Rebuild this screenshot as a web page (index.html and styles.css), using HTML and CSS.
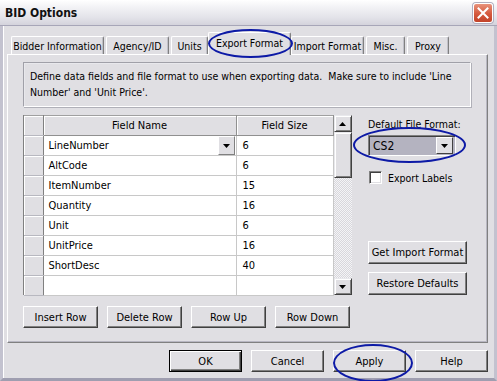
FILE: index.html
```html
<!DOCTYPE html>
<html>
<head>
<meta charset="utf-8">
<link rel="stylesheet" href="styles.css">
</head>
<body>
<div class="window">
  <div class="titlebar">
    <span class="title">BID Options</span>
    <span class="close"><svg width="12" height="12" viewBox="0 0 12 12"><path d="M1.5 1.5 L10.5 10.5 M10.5 1.5 L1.5 10.5" stroke="#fff" stroke-width="2" stroke-linecap="square"/></svg></span>
  </div>
  <div class="frame">
    <div class="tabs">
      <div class="tab t-bidder">Bidder Information</div>
      <div class="tab t-agency">Agency/ID</div>
      <div class="tab t-units">Units</div>
      <div class="tab t-export active">Export Format</div>
      <div class="tab t-import">Import Format</div>
      <div class="tab t-misc">Misc.</div>
      <div class="tab t-proxy">Proxy</div>
    </div>
    <div class="panel">
      <div class="desc">Define data fields and file format to use when exporting data.&nbsp; Make sure to include 'Line Number' and 'Unit Price'.</div>
      <div class="main">
        <div class="grid">
          <table class="cells">
            <tr class="head"><td class="rh"></td><td class="hc">Field Name</td><td class="hc">Field Size</td></tr>
            <tr><td class="rh"></td><td class="c name"><div class="namewrap"><span>LineNumber</span><span class="ddbtn"><svg width="7" height="4" viewBox="0 0 7 4"><path d="M0 0 H7 L3.5 4 Z" fill="#000"/></svg></span></div></td><td class="c">6</td></tr>
            <tr><td class="rh"></td><td class="c">AltCode</td><td class="c">6</td></tr>
            <tr><td class="rh"></td><td class="c">ItemNumber</td><td class="c">15</td></tr>
            <tr><td class="rh"></td><td class="c">Quantity</td><td class="c">16</td></tr>
            <tr><td class="rh"></td><td class="c">Unit</td><td class="c">6</td></tr>
            <tr><td class="rh"></td><td class="c">UnitPrice</td><td class="c">16</td></tr>
            <tr><td class="rh"></td><td class="c">ShortDesc</td><td class="c">40</td></tr>
            <tr><td class="rh"></td><td class="c"></td><td class="c"></td></tr>
          </table>
          <div class="vscroll">
            <div class="sbtn"><svg width="7" height="4" viewBox="0 0 7 4"><path d="M0 4 H7 L3.5 0 Z" fill="#000"/></svg></div>
            <div class="thumb"></div>
            <div class="track"></div>
            <div class="sbtn"><svg width="7" height="4" viewBox="0 0 7 4"><path d="M0 0 H7 L3.5 4 Z" fill="#000"/></svg></div>
          </div>
        </div>
        <div class="side">
          <div class="label">Default File Format:</div>
          <div class="combo"><span class="combotext">CS2</span><span class="combobtn"><svg width="7" height="4" viewBox="0 0 7 4"><path d="M0 0 H7 L3.5 4 Z" fill="#000"/></svg></span></div>
          <div class="check"><span class="box"></span><span>Export Labels</span></div>
          <div class="sidebtns">
            <div class="btn wide">Get Import Format</div>
            <div class="btn wide">Restore Defaults</div>
          </div>
        </div>
      </div>
      <div class="rowbtns">
        <div class="btn rb">Insert Row</div>
        <div class="btn rb">Delete Row</div>
        <div class="btn rb">Row Up</div>
        <div class="btn rb">Row Down</div>
      </div>
    </div>
    <div class="dlgbtns">
      <div class="btn db default">OK</div>
      <div class="btn db">Cancel</div>
      <div class="btn db">Apply</div>
      <div class="btn db">Help</div>
    </div>
  </div>
  <div class="mark mark-tab"></div>
  <div class="mark mark-combo"></div>
  <div class="mark mark-apply"></div>
</div>
</body>
</html>
```
FILE: styles.css
```css
* { box-sizing: border-box; }
html, body { margin: 0; padding: 0; }
body {
  width: 497px;
  height: 381px;
  overflow: hidden;
  font-family: "DejaVu Sans Condensed", "DejaVu Sans", sans-serif;
  font-size: 10.5px;
  color: #000;
  background: #e0dfe3;
}
.window {
  position: relative;
  width: 497px;
  height: 381px;
  background: #e0dfe3;
  display: flex;
  flex-direction: column;
}
.titlebar {
  height: 26px;
  flex: none;
  display: flex;
  align-items: center;
  justify-content: space-between;
  padding: 0 4px 0 5px;
  background: linear-gradient(#ffffff 0%, #f2f2f5 30%, #e3e3e9 70%, #d4d3dc 100%);
  border-bottom: 1px solid #a7a6b8;
}
.title {
  font-family: "DejaVu Sans Condensed", "DejaVu Sans", sans-serif;
  font-weight: bold;
  font-size: 12px;
  color: #111;
  padding-top: 1px;
}
.close {
  width: 20px;
  height: 20px;
  border: 1px solid #fff;
  border-radius: 3px;
  background: linear-gradient(#e8937c, #d4583c 55%, #c2432a);
  display: flex;
  align-items: center;
  justify-content: center;
  box-shadow: 0 0 0 1px #b0aebe;
}
.frame {
  flex: 1;
  display: flex;
  flex-direction: column;
  padding: 6px 6px 0 4px;
  border-left: 3px solid #c3c2cf;
  border-right: 3px solid #c3c2cf;
  border-bottom: 3px solid #9f9eb0;
  box-shadow: inset 1px 0 0 #ffffff;
}
.tabs {
  display: flex;
  align-items: flex-end;
  height: 22px;
  padding-left: 4px;
  gap: 2px;
  position: relative;
  z-index: 2;
}
.tab {
  height: 18px;
  padding: 0;
  display: flex;
  align-items: center;
  justify-content: center;
  flex: none;
  border-top: 1px solid #fff;
  border-left: 1px solid #fff;
  border-right: 1px solid #808080;
  box-shadow: inset -1px 0 0 #c0c0c8;
  border-radius: 2px 2px 0 0;
  background: #e0dfe3;
  white-space: nowrap;
}
.t-bidder { width: 93px; }
.t-agency { width: 63px; }
.t-units { width: 37px; }
.t-export { width: 79px; }
.t-import { width: 73px; }
.t-misc { width: 39px; }
.t-proxy { width: 42px; }
.tab.active {
  position: relative;
  z-index: 3;
  width: 83px;
  height: 23px;
  margin: 0 -2px -1px -2px;
  padding: 0 0 3px 0;
}
.panel {
  height: 289px;
  flex: none;
  border-top: 1px solid #fff;
  border-left: 1px solid #fff;
  border-right: 1px solid #808080;
  border-bottom: 1px solid #808080;
  box-shadow: inset -1px -1px 0 #b8b7c2;
  padding: 7px 16px 0 15px;
}
.desc {
  height: 45px;
  border-top: 1px solid #a0a0a8;
  border-left: 1px solid #a0a0a8;
  border-right: 1px solid #fff;
  border-bottom: 1px solid #fff;
  box-shadow: 1px 1px 0 #b0b0b8, inset 1px 1px 0 #e8e8ec;
  padding: 5px 6px 0 6px;
  line-height: 16px;
}
.main {
  display: flex;
  margin-top: 8px;
  height: 180px;
}
.grid {
  display: flex;
  width: 327px;
  height: 180px;
  border-left: 1px solid #808080;
  flex: none;
}
.cells {
  border-collapse: collapse;
  width: 309px;
  table-layout: fixed;
}
.cells td {
  height: 20px;
  padding: 0;
  white-space: nowrap;
}
.cells td.rh {
  width: 19px;
  background: #e0dfe3;
  border-right: 1px solid #808080;
  border-bottom: 1px solid #b8b8c0;
  box-shadow: inset 1px 1px 0 #fff;
}
.head td.hc {
  background: #e0dfe3;
  text-align: center;
  border-right: 1px solid #909090;
  border-bottom: 1px solid #909090;
  border-top: 1px solid #a0a0a0;
  box-shadow: inset 1px 1px 0 #fff;
  font-size: 11px;
}
.head td.rh { border-top: 1px solid #a0a0a0; }
.head td.hc:nth-child(2) { width: 193px; }
.head td.hc:nth-child(3) { width: 97px; }
.cells td.c {
  background: #fff;
  border-right: 1px solid #c8c8c8;
  border-bottom: 1px solid #c8c8c8;
  padding-left: 5px;
  font-size: 11px;
}
.cells td.c + td.c { padding-left: 6px; }
.cells td.name { padding-left: 5px; padding-right: 1px; }
.namewrap {
  display: flex;
  align-items: center;
  justify-content: space-between;
  height: 19px;
}
.ddbtn {
  width: 17px;
  height: 19px;
  background: #e0dfe3;
  border-top: 1px solid #fff;
  border-left: 1px solid #fff;
  border-right: 1px solid #808080;
  border-bottom: 1px solid #808080;
  display: flex;
  align-items: center;
  justify-content: center;
}
.vscroll {
  width: 18px;
  height: 180px;
  display: flex;
  flex-direction: column;
  flex: none;
}
.sbtn, .thumb {
  background: #e0dfe3;
  border-top: 1px solid #e8e8ec;
  border-left: 1px solid #e8e8ec;
  border-right: 1px solid #404040;
  border-bottom: 1px solid #404040;
  box-shadow: inset 1px 1px 0 #fff, inset -1px -1px 0 #808080;
}
.sbtn {
  height: 17px;
  display: flex;
  align-items: center;
  justify-content: center;
  flex: none;
}
.thumb { height: 46px; flex: none; }
.track {
  flex: 1;
  background-color: #ededf0;
  background-image: repeating-conic-gradient(#d8d7dc 0 25%, #f4f4f6 0 50%);
  background-size: 2px 2px;
}
.side {
  margin-left: 18px;
  flex: 1;
  display: flex;
  flex-direction: column;
}
.label {
  margin-top: 3px;
  line-height: 13px;
}
.combo {
  margin-top: 4px;
  width: 88px;
  height: 21px;
  border-top: 1px solid #808080;
  border-left: 1px solid #808080;
  border-right: 1px solid #fff;
  border-bottom: 1px solid #fff;
  box-shadow: inset 1px 1px 0 #404040;
  background: #b4b3c0;
  display: flex;
  align-items: center;
  justify-content: space-between;
  padding: 2px 2px 2px 4px;
  font-size: 12px;
}
.combobtn {
  width: 17px;
  height: 17px;
  background: #e0dfe3;
  border-top: 1px solid #fff;
  border-left: 1px solid #fff;
  border-right: 1px solid #404040;
  border-bottom: 1px solid #404040;
  display: flex;
  align-items: center;
  justify-content: center;
}
.check {
  margin-top: 15px;
  display: flex;
  align-items: center;
  gap: 6px;
}
.box {
  width: 13px;
  height: 13px;
  background: #fff;
  border-top: 1px solid #808080;
  border-left: 1px solid #808080;
  border-right: 1px solid #fff;
  border-bottom: 1px solid #fff;
  box-shadow: inset 1px 1px 0 #404040, inset -1px -1px 0 #e0dfe3;
  margin-left: 1px;
}
.sidebtns {
  margin-top: auto;
  display: flex;
  flex-direction: column;
  gap: 8px;
}
.btn {
  background: #e0dfe3;
  border-top: 1px solid #fff;
  border-left: 1px solid #fff;
  border-right: 1px solid #404040;
  border-bottom: 1px solid #404040;
  box-shadow: inset -1px -1px 0 #808080;
  display: flex;
  align-items: center;
  justify-content: center;
  white-space: nowrap;
  font-size: 11px;
}
.btn.wide { width: 99px; height: 23px; }
.rowbtns {
  margin-top: 11px;
  display: flex;
  gap: 9px;
}
.btn.rb { width: 75px; height: 22px; }
.dlgbtns {
  margin-top: 7px;
  display: flex;
  justify-content: flex-end;
  gap: 9px;
}
.btn.db { width: 73px; height: 22px; }
.btn.default {
  border: 1px solid #000;
  box-shadow: inset 1px 1px 0 #fff, inset -1px -1px 0 #404040, inset -2px -2px 0 #808080;
}
.mark {
  position: absolute;
  border: 2px solid #0d1aa6;
  border-radius: 50%;
  z-index: 5;
}
.mark-tab { left: 208px; top: 29px; width: 85px; height: 29px; }
.mark-combo { left: 353px; top: 127px; width: 113px; height: 36px; }
.mark-apply { left: 333px; top: 344px; width: 80px; height: 38px; }
```
